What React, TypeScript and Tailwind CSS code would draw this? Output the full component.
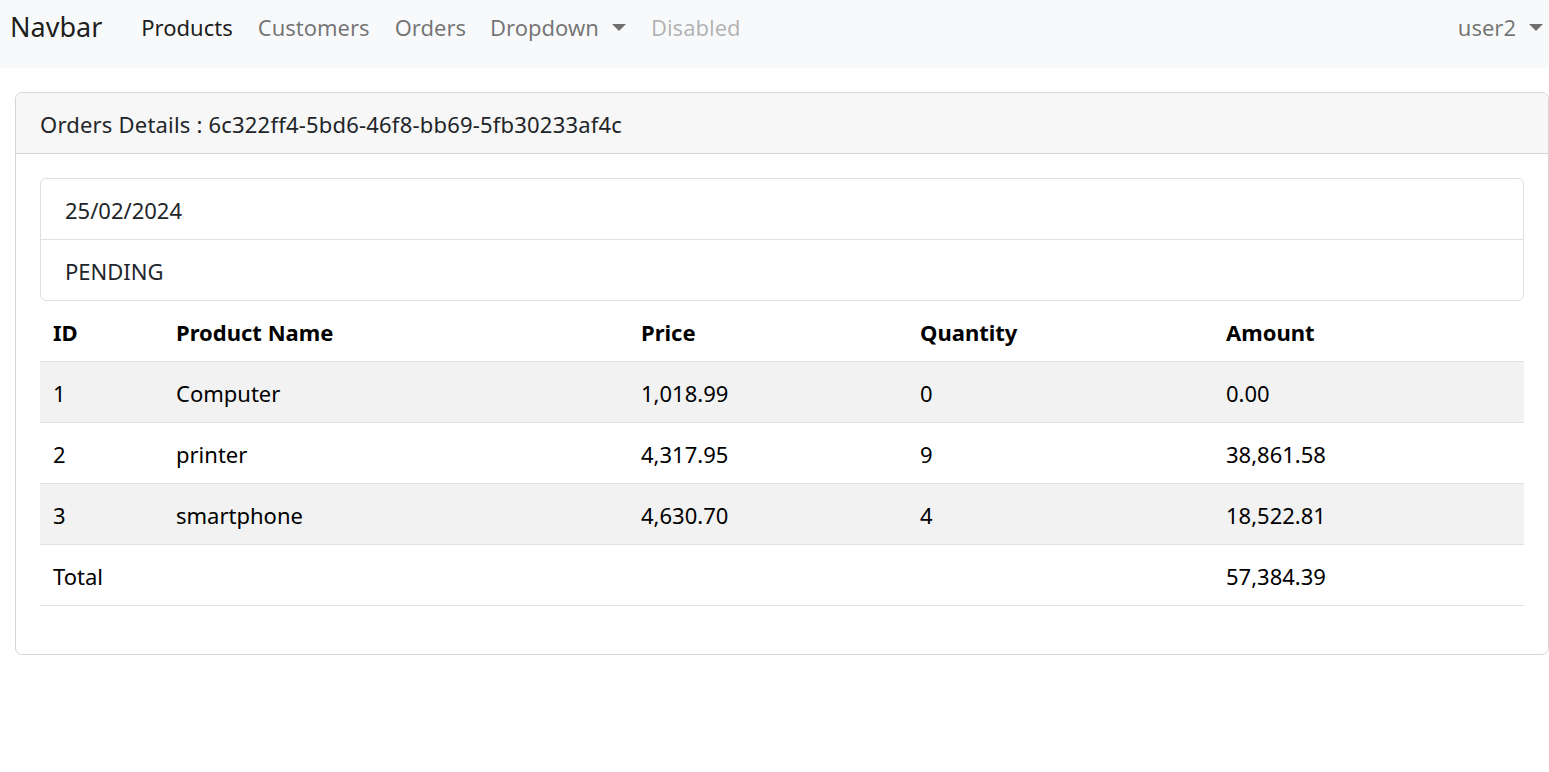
const items = [
  { id: 1, name: "Computer", price: "1,018.99", qty: 0, amount: "0.00" },
  { id: 2, name: "printer", price: "4,317.95", qty: 9, amount: "38,861.58" },
  { id: 3, name: "smartphone", price: "4,630.70", qty: 4, amount: "18,522.81" },
];

const Caret = () => (
  <span className="ml-[13px] inline-block h-0 w-0 border-x-[7px] border-t-[7px] border-x-transparent border-t-current align-middle" />
);

const Navbar = () => {
  return (
    <nav className="flex h-[68px] items-start bg-[#f8f9fa] pt-[12px] pl-[10px] pr-[6px]">
      <a className="mr-[39px] text-[27px] leading-[30px] text-black/90">Navbar</a>
      <ul className="flex text-[22px] leading-[30px]">
        <li className="pr-[25px] text-black/90">Products</li>
        <li className="pr-[25px] text-black/55">Customers</li>
        <li className="pr-[24px] text-black/55">Orders</li>
        <li className="flex items-center pr-[25px] text-black/55">
          Dropdown
          <Caret />
        </li>
        <li className="text-black/30">Disabled</li>
      </ul>
      <div className="ml-auto flex items-center text-[22px] leading-[30px] text-black/55">
        user2
        <Caret />
      </div>
    </nav>
  );
};

const App = () => {
  return (
    <div className="min-h-screen bg-white text-[#212529]" style={{ fontFamily: '"Noto Sans", "Open Sans", sans-serif' }}>
      <Navbar />
      <div className="pt-6 pl-[15px]">
        <div className="rounded-[7px] border border-[#d6d6d6]">
          <div className="rounded-t-[7px] border-b border-[#d6d6d6] bg-[#f7f7f7] px-6 pt-[16px] pb-[14px] text-[22px] leading-[30px] tracking-[0.2px]">
            Orders Details : 6c322ff4-5bd6-46f8-bb69-5fb30233af4c
          </div>
          <div className="px-6 pt-6 pb-12">
            <ul className="rounded-[6px] border border-[#dfdfdf] text-[22px] leading-[30px]">
              <li className="border-b border-[#dfdfdf] px-6 pt-[16px] pb-[14px]">25/02/2024</li>
              <li className="px-6 pt-[16px] pb-[14px]">PENDING</li>
            </ul>
            <table className="w-full table-fixed border-collapse text-[22px] leading-[30px] text-black">
              <colgroup>
                <col className="w-[123px]" />
                <col className="w-[465px]" />
                <col className="w-[279px]" />
                <col className="w-[306px]" />
                <col />
              </colgroup>
              <thead>
                <tr className="border-b border-[#dee2e6] text-left font-bold">
                  <th className="px-[13px] pt-[16px] pb-[14px]">ID</th>
                  <th className="px-[13px] pt-[16px] pb-[14px]">Product Name</th>
                  <th className="px-[13px] pt-[16px] pb-[14px]">Price</th>
                  <th className="px-[13px] pt-[16px] pb-[14px]">Quantity</th>
                  <th className="px-[13px] pt-[16px] pb-[14px]">Amount</th>
                </tr>
              </thead>
              <tbody>
                {items.map((it, i) => (
                  <tr key={it.id} className={`border-b border-[#dee2e6] ${i % 2 === 0 ? "bg-[#f2f2f2]" : ""}`}>
                    <td className="px-[13px] pt-[16px] pb-[14px]">{it.id}</td>
                    <td className="px-[13px] pt-[16px] pb-[14px]">{it.name}</td>
                    <td className="px-[13px] pt-[16px] pb-[14px]">{it.price}</td>
                    <td className="px-[13px] pt-[16px] pb-[14px]">{it.qty}</td>
                    <td className="px-[13px] pt-[16px] pb-[14px]">{it.amount}</td>
                  </tr>
                ))}
                <tr className="border-b border-[#dee2e6]">
                  <td className="px-[13px] pt-[16px] pb-[14px]">Total</td>
                  <td />
                  <td />
                  <td />
                  <td className="px-[13px] pt-[16px] pb-[14px]">57,384.39</td>
                </tr>
              </tbody>
            </table>
          </div>
        </div>
      </div>
    </div>
  );
};

export default App;
